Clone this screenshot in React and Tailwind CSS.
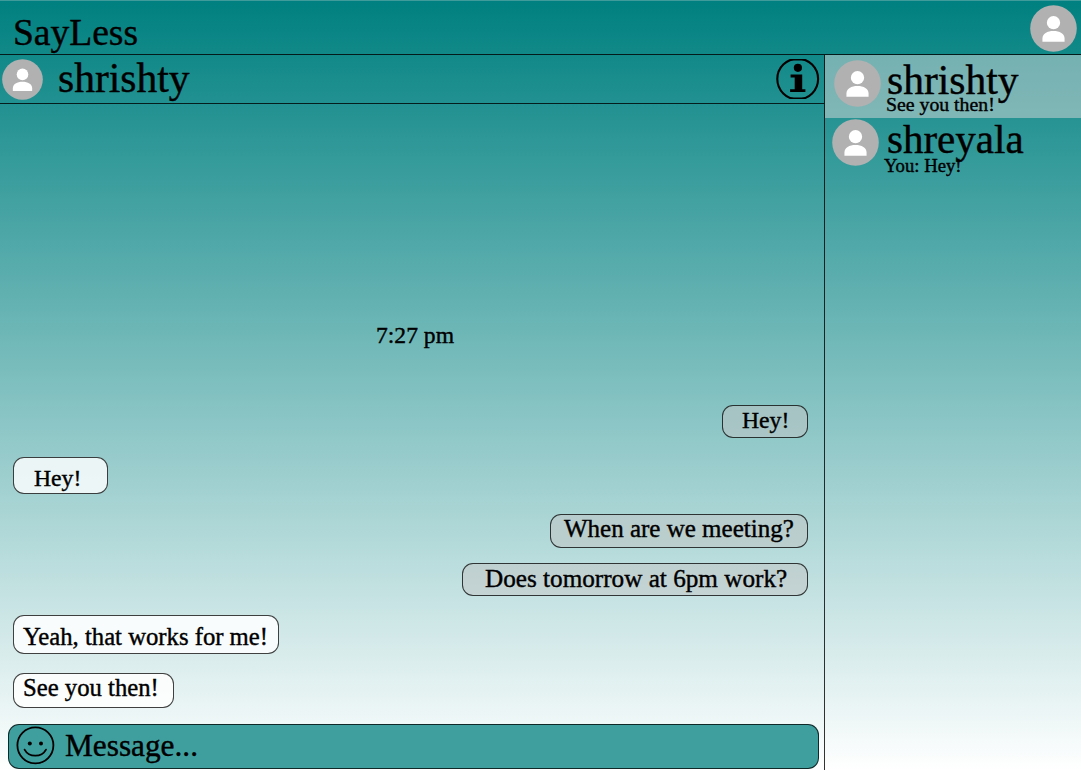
import React from "react";

function Avatar({ className }) {
  return (
    <svg viewBox="0 0 48 48" className={"shrink-0 " + className} aria-hidden="true">
      <circle cx="24" cy="24" r="23.8" fill="#b1b1b1" />
      <circle cx="24" cy="18" r="6.8" fill="#fff" />
      <path d="M12.7 37.5v-3.3c0-5 5-7.6 11.3-7.6s11.3 2.6 11.3 7.6v3.3z" fill="#fff" />
    </svg>
  );
}

function InfoIcon() {
  return (
    <svg viewBox="0 0 44 40" className="h-10 w-11 shrink-0" aria-hidden="true">
      <circle cx="21.7" cy="20" r="20.4" fill="none" stroke="#000" strokeWidth="2.1" />
      <path d="M14 .8h15.4M14 39.2h15.4" stroke="#000" strokeWidth="1.4" />
      <circle cx="21.9" cy="8.8" r="4.1" />
      <path d="M14.6 15.6H26.2v14.6h3.2V33H14.1v-2.8h4.6V18.4h-4.1z" />
    </svg>
  );
}

function Smiley() {
  return (
    <svg viewBox="0 0 38 38" className="h-[38px] w-[38px] shrink-0 overflow-visible" fill="none" stroke="#000" strokeWidth="1.8" strokeLinecap="round" aria-hidden="true">
      <circle cx="19.4" cy="18.3" r="18" />
      <circle cx="13.8" cy="16.5" r="2" fill="#000" stroke="none" />
      <circle cx="25" cy="16.5" r="2" fill="#000" stroke="none" />
      <path d="M8.6 22.6c4.3 8.1 17.1 8.1 21.4 0" />
    </svg>
  );
}

function Bubble({ className, children }) {
  return (
    <div className={"shrink-0 rounded-[11px] border border-black/75 whitespace-nowrap " + className}>
      {children}
    </div>
  );
}

export default function App() {
  return (
    <div className="flex h-[770px] w-[1081px] flex-col overflow-hidden border-t border-[#3f9a9a] bg-linear-to-b/srgb from-[#008080] to-white font-['Liberation_Serif',serif] text-black [-webkit-text-stroke:0.4px_black]">
      <header className="flex h-[54px] shrink-0 items-start justify-between border-b border-black/80 pt-1 pr-[4px] pl-[13px]">
        <h1 className="mt-[8px] text-[37.5px] leading-[40px]">SayLess</h1>
        <Avatar className="h-[47px] w-[47px]" />
      </header>
      <div className="flex min-h-0 flex-1">
        <main className="flex w-[825px] shrink-0 flex-col border-r border-black/80">
          <div className="flex h-[49px] shrink-0 items-start border-b border-black/80 pt-1 pr-[4px] pl-[2px]">
            <Avatar className="h-[41px] w-[41px]" />
            <h2 className="-mt-px ml-[15px] text-[41.5px] leading-[41px]">shrishty</h2>
            <div className="ml-auto">
              <InfoIcon />
            </div>
          </div>
          <div className="flex min-h-0 flex-1 flex-col items-start pr-[16px] pl-[13px]">
            <time className="mt-[216px] ml-[363px] h-[31px] text-[23.6px] leading-[30px]">7:27 pm</time>
            <Bubble className="mt-[54px] h-[33px] w-[86px] self-end bg-[#c4c4c4]/50 pl-[19px] text-[23.7px] leading-[28px]">Hey!</Bubble>
            <Bubble className="mt-[19px] h-[37px] w-[95px] bg-white/80 pl-[20px] text-[23.7px] leading-[40px]">Hey!</Bubble>
            <Bubble className="mt-5 h-[34px] w-[258px] self-end bg-[#c4c4c4]/50 pl-[13px] text-[25px] leading-[27px]">When are we meeting?</Bubble>
            <Bubble className="mt-[15px] h-[33px] w-[346px] self-end bg-[#c4c4c4]/50 pl-[22px] text-[25.2px] leading-[29px]">Does tomorrow at 6pm work?</Bubble>
            <Bubble className="mt-[19px] h-[39px] w-[266px] bg-white/85 pl-[9px] text-[24.7px] leading-[41px]">Yeah, that works for me!</Bubble>
            <Bubble className="mt-[19px] h-[35px] w-[161px] bg-white/85 pl-[9px] text-[24.7px] leading-[27px]">See you then!</Bubble>
          </div>
          <div className="mr-[5px] mb-[1px] ml-[8px] flex h-[45px] shrink-0 items-start rounded-[11px] border border-black/75 bg-[#3f9f9f] pt-[2px] pl-[7px]">
            <Smiley />
            <span className="ml-[11px] text-[31.3px] leading-[38px]">Message...</span>
          </div>
        </main>
        <aside className="flex min-w-0 flex-1 flex-col">
          <div className="flex h-[63px] shrink-0 items-start bg-[#d9d9d9]/50 pt-[5px] pl-[9px]">
            <Avatar className="h-[47px] w-[47px]" />
            <div className="ml-[6px] flex flex-col">
              <span className="h-[34px] text-[41.5px] leading-[41px]">shrishty</span>
              <span className="-ml-px text-[19.8px] leading-[20px]">See you then!</span>
            </div>
          </div>
          <div className="flex h-[62px] shrink-0 items-start pt-[1px] pl-[7px]">
            <Avatar className="h-[47px] w-[47px]" />
            <div className="ml-[8px] flex flex-col">
              <span className="h-[37px] text-[41px] leading-[41px]">shreyala</span>
              <span className="-ml-[3px] text-[18.7px] leading-[20px]">You: Hey!</span>
            </div>
          </div>
        </aside>
      </div>
    </div>
  );
}
